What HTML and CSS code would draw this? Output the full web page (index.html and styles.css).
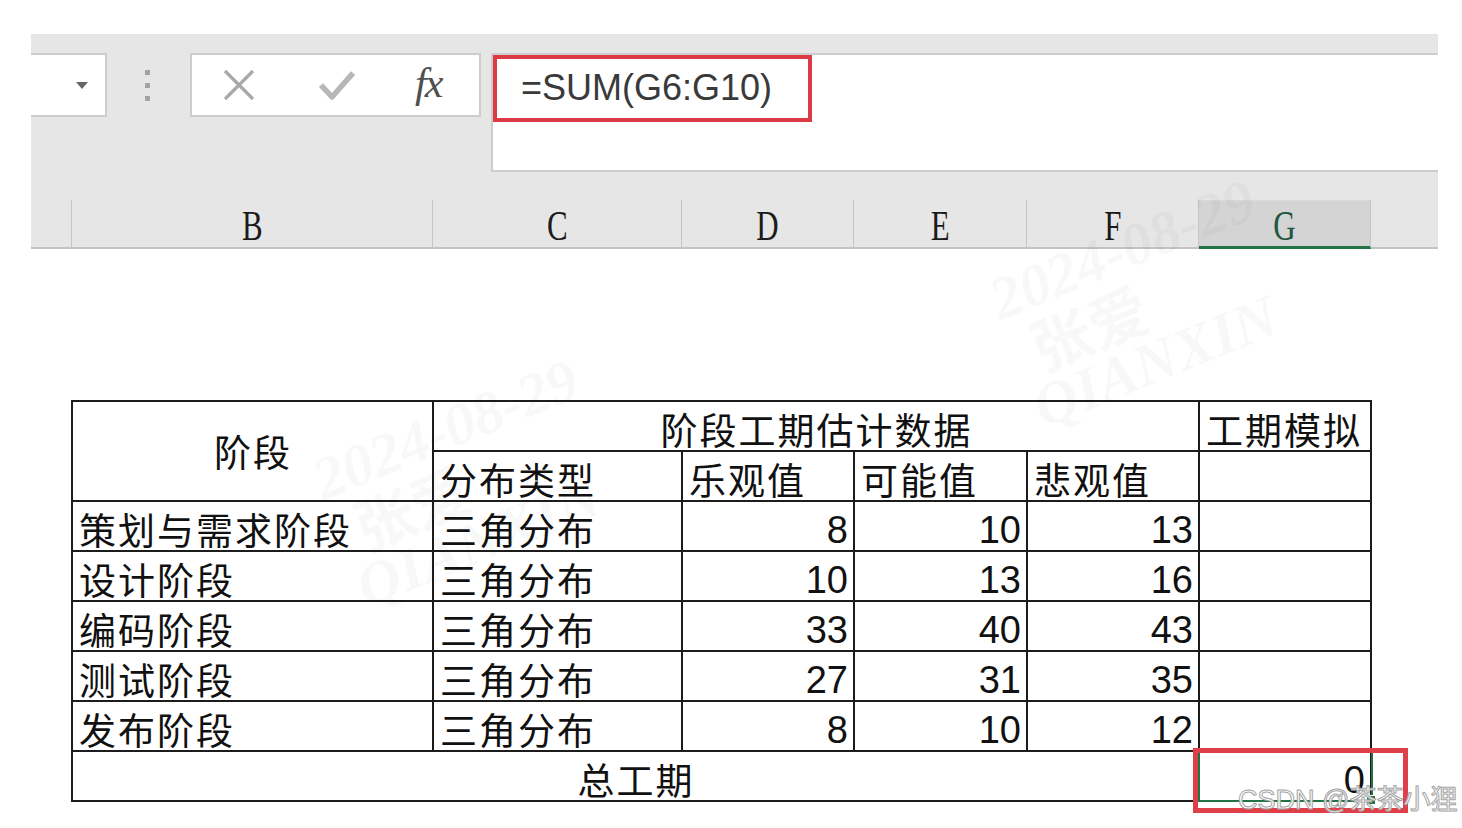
FILE: index.html
```html
<!DOCTYPE html>
<html lang="zh-CN">
<head>
<meta charset="utf-8">
<title>Excel 总工期</title>
<link rel="stylesheet" href="styles.css">
</head>
<body>
<div class="screen">
  <div class="ribbon">
    <div class="toolbar">
      <div class="namebox"><span class="caret"></span></div>
      <div class="grip"><i></i><i></i><i></i></div>
      <div class="fxbox">
        <svg class="ico-x" width="32" height="32" viewBox="0 0 32 32"><path d="M2 2 L30 30 M30 2 L2 30" stroke="#a9a9a9" stroke-width="3.2" fill="none"/></svg>
        <svg class="ico-ok" width="36" height="32" viewBox="0 0 36 32"><path d="M2 15 L13 27 L34 3" stroke="#b7b7b7" stroke-width="5.5" fill="none" stroke-linejoin="round"/></svg>
        <span class="fx">fx</span>
      </div>
      <div class="formula"><div class="formula-text">=SUM(G6:G10)</div></div>
    </div>
    <div class="colheads">
      <div class="ch w-a"></div>
      <div class="ch w-b"><span class="lt">B</span></div>
      <div class="ch w-c"><span class="lt">C</span></div>
      <div class="ch w-d"><span class="lt">D</span></div>
      <div class="ch w-e"><span class="lt">E</span></div>
      <div class="ch w-f"><span class="lt">F</span></div>
      <div class="ch w-g sel"><span class="lt">G</span></div>
      <div class="ch w-rest"></div>
    </div>
  </div>
  <div class="sheet">
    <table class="grid">
      <colgroup>
        <col class="cb"><col class="cc"><col class="cd"><col class="ce"><col class="cf"><col class="cg">
      </colgroup>
      <tr>
        <td rowspan="2" class="center mid">阶段</td>
        <td colspan="4" class="center">阶段工期估计数据</td>
        <td>工期模拟</td>
      </tr>
      <tr>
        <td>分布类型</td><td>乐观值</td><td>可能值</td><td>悲观值</td><td></td>
      </tr>
      <tr><td>策划与需求阶段</td><td>三角分布</td><td class="num">8</td><td class="num">10</td><td class="num">13</td><td></td></tr>
      <tr><td>设计阶段</td><td>三角分布</td><td class="num">10</td><td class="num">13</td><td class="num">16</td><td></td></tr>
      <tr><td>编码阶段</td><td>三角分布</td><td class="num">33</td><td class="num">40</td><td class="num">43</td><td></td></tr>
      <tr><td>测试阶段</td><td>三角分布</td><td class="num">27</td><td class="num">31</td><td class="num">35</td><td></td></tr>
      <tr><td>发布阶段</td><td>三角分布</td><td class="num">8</td><td class="num">10</td><td class="num">12</td><td></td></tr>
      <tr>
        <td colspan="5" class="center">总工期</td>
        <td class="num active">0<span class="selbox"><span class="handle"></span></span><span class="mark"></span></td>
      </tr>
    </table>
  </div>
</div>
<div class="wm wm1"><div>2024-08-29</div><div class="wm-cn">张爱</div><div>QIANXIN</div></div>
<div class="wm wm2"><div>2024-08-29</div><div class="wm-cn">张爱</div><div>QIANXIN</div></div>
<div class="csdn">CSDN @茶茶小狸</div>
</body>
</html>
```
FILE: styles.css
```css
html, body {
  margin: 0;
  padding: 0;
  background: #ffffff;
  width: 1462px;
  height: 828px;
  overflow: hidden;
  position: relative;
}
.screen {
  padding: 34px 0 0 31px;
  width: 1407px;
}
.ribbon {
  background: #e6e6e6;
  width: 1407px;
}
.toolbar {
  display: flex;
  align-items: flex-start;
  padding-top: 19px;
  height: 119px;
}
.namebox {
  box-sizing: border-box;
  width: 76px;
  height: 64px;
  background: #fff;
  border: 2px solid #cdcdcd;
  border-left: none;
  display: flex;
  justify-content: flex-end;
  align-items: center;
  padding-right: 17px;
}
.caret {
  width: 0;
  height: 0;
  border-left: 6px solid transparent;
  border-right: 6px solid transparent;
  border-top: 7px solid #666;
}
.grip {
  margin-left: 38px;
  padding-top: 17px;
  display: flex;
  flex-direction: column;
  gap: 8px;
}
.grip i {
  display: block;
  width: 5px;
  height: 5px;
  background: #a3a3a3;
}
.fxbox {
  box-sizing: border-box;
  margin-left: 40px;
  width: 291px;
  height: 64px;
  background: #fff;
  border: 2px solid #cdcdcd;
  display: flex;
  align-items: center;
  position: relative;
}
.ico-x { margin-left: 31px; }
.ico-ok { margin-left: 64px; margin-top: 2px; }
.fx {
  margin-left: 60px;
  font-family: "Liberation Serif", serif;
  font-style: italic;
  font-size: 42px;
  color: #4f4f4f;
  letter-spacing: -2px;
  line-height: 42px;
  margin-top: -4px;
}
.formula {
  box-sizing: border-box;
  margin-left: 10px;
  width: 947px;
  height: 119px;
  background: #fff;
  border: 2px solid #cdcdcd;
  border-right: none;
}
.formula-text {
  box-sizing: border-box;
  width: 319px;
  height: 67px;
  border: 4px solid #dc3a44;
  padding-left: 24px;
  font-family: "Liberation Sans", Arial, sans-serif;
  font-size: 36px;
  line-height: 57px;
  color: #3a3a3a;
}
.colheads {
  margin-top: 28px;
  display: flex;
  height: 49px;
}
.ch {
  box-sizing: border-box;
  height: 49px;
  border-right: 1px solid #c5c5c5;
  border-bottom: 2px solid #c3c3c3;
  display: flex;
  justify-content: center;
  align-items: flex-end;
  padding-bottom: 0;
}
.w-a { width: 41px; }
.w-b { width: 361px; }
.w-c { width: 249px; }
.w-d { width: 172px; }
.w-e { width: 173px; }
.w-f { width: 172px; }
.w-g { width: 172px; }
.w-rest { width: 67px; border-right: none; }
.ch.sel {
  background: #d4d4d4;
  border-bottom: 3px solid #217346;
  border-top: 1px solid #d9d9d9;
}
.lt {
  display: inline-block;
  font-family: "Liberation Serif", serif;
  font-size: 43px;
  line-height: 42px;
  color: #1b1b1b;
  transform: scaleX(0.72);
}
.sel .lt { color: #21573c; margin-bottom: -1px; }
.sheet {
  background: #fff;
  padding: 151px 0 0 40px;
}
.grid {
  border-collapse: collapse;
  table-layout: fixed;
  width: 1300px;
  font-family: "Noto Sans CJK SC", "Noto Sans", sans-serif;
  font-size: 37px;
  letter-spacing: 2px;
  color: #111;
}
.cb { width: 361px; }
.cc { width: 249px; }
.cd { width: 172px; }
.ce { width: 173px; }
.cf { width: 172px; }
.cg { width: 172px; }
.grid tr { height: 50px; }
.grid td {
  border: 2px solid #1c1c1c;
  padding: 0 5px 0 6px;
  height: 48px;
  line-height: 41px;
  vertical-align: bottom;
  white-space: nowrap;
  overflow: visible;
}
.grid td.center { text-align: center; }
.grid td.mid { vertical-align: middle; }
.grid td.num {
  text-align: right;
  font-family: "Liberation Sans", Arial, sans-serif;
  font-size: 38px;
  letter-spacing: 0;
  line-height: 38px;
  height: 47px;
  padding-right: 5px;
  padding-bottom: 1px;
}
.grid td.active { position: relative; }
.selbox {
  position: absolute;
  left: -2px;
  top: -1px;
  right: -3px;
  bottom: -2px;
  border: 2px solid #217346;
  border-top-color: transparent;
}
.handle {
  position: absolute;
  right: -5px;
  bottom: -5px;
  width: 8px;
  height: 8px;
  background: #217346;
  border: 1px solid #fff;
}
.mark {
  position: absolute;
  left: -7px;
  top: -4px;
  width: 215px;
  height: 65px;
  box-sizing: border-box;
  border: 5px solid #df3f49;
}
.wm {
  position: absolute;
  font-family: "Liberation Serif", serif;
  font-style: italic;
  font-weight: bold;
  font-size: 60px;
  line-height: 58px;
  color: rgba(0, 0, 0, 0.028);
  transform: rotate(-22deg);
  transform-origin: left top;
  pointer-events: none;
  white-space: nowrap;
}
.wm-cn {
  font-family: "Noto Sans CJK SC", sans-serif;
  font-style: normal;
  padding-left: 20px;
}
.wm1 { left: 305px; top: 455px; }
.wm2 { left: 982px; top: 275px; }
.csdn {
  position: absolute;
  left: 1238px;
  top: 784px;
  font-family: "Liberation Sans", "Noto Sans CJK SC", sans-serif;
  font-size: 27px;
  line-height: 32px;
  color: rgba(255, 255, 255, 0.92);
  -webkit-text-stroke: 1px #a3a3a3;
  white-space: nowrap;
}
```
